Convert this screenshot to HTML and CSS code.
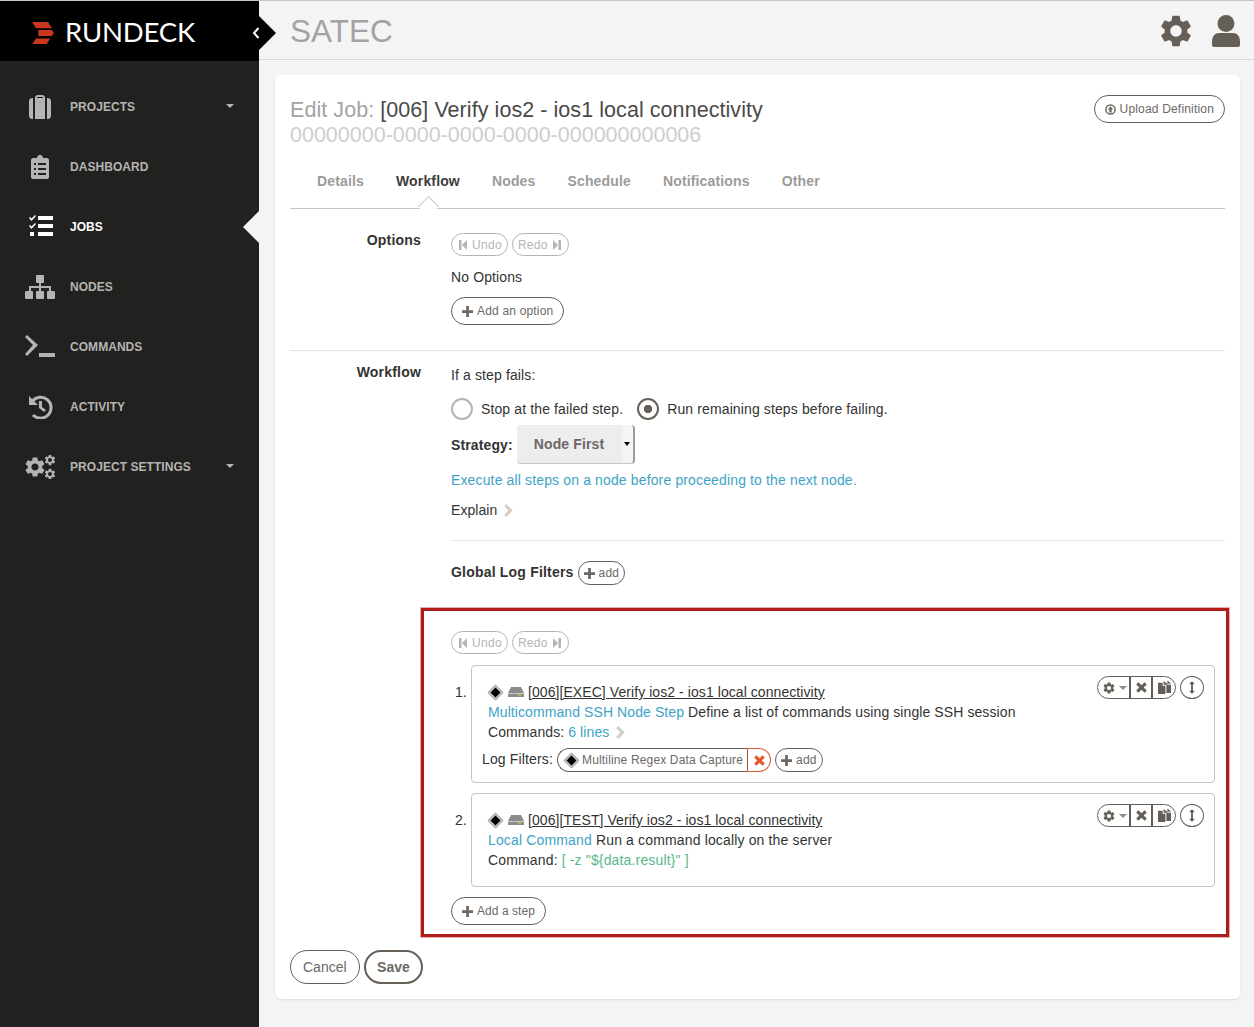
FILE: index.html
```html
<!DOCTYPE html>
<html lang="en">
<head>
    <meta charset="UTF-8">
    <title>Edit Job - Rundeck</title>
    <link rel="stylesheet" href="styles.css">
</head>
<body>
    <svg class="defs" width="0" height="0">
        <symbol id="cog" viewBox="0 0 24 24"><path d="M19.14 12.94c.04-.3.06-.61.06-.94 0-.32-.02-.64-.07-.94l2.03-1.58a.49.49 0 0 0 .12-.61l-1.92-3.32a.488.488 0 0 0-.59-.22l-2.39.96c-.5-.38-1.03-.7-1.62-.94l-.36-2.54a.484.484 0 0 0-.48-.41h-3.84c-.24 0-.43.17-.47.41l-.36 2.54c-.59.24-1.13.57-1.62.94l-2.39-.96c-.22-.08-.47 0-.59.22L2.74 8.87c-.12.21-.08.47.12.61l2.03 1.58c-.05.3-.09.63-.09.94s.02.64.07.94l-2.03 1.58a.49.49 0 0 0-.12.61l1.92 3.32c.12.22.37.29.59.22l2.39-.96c.5.38 1.03.7 1.62.94l.36 2.54c.05.24.24.41.48.41h3.84c.24 0 .44-.17.47-.41l.36-2.54c.59-.24 1.13-.56 1.62-.94l2.39.96c.22.08.47 0 .59-.22l1.92-3.32c.12-.22.07-.47-.12-.61l-2.01-1.58zM12 15.6c-1.98 0-3.6-1.62-3.6-3.6s1.62-3.6 3.6-3.6 3.6 1.62 3.6 3.6-1.62 3.6-3.6 3.6z"/></symbol>
        <symbol id="plus" viewBox="0 0 12 12"><path d="M4.5 0h3v4.5H12v3H7.5V12h-3V7.5H0v-3h4.5z"/></symbol>
        <symbol id="cross" viewBox="0 0 12 12"><path d="M2.6.2 6 3.600 9.400.2l2.400 2.400L8.400 6l3.400 3.400-2.400 2.400L6 8.400l-3.400 3.400-2.400-2.400L3.600 6 .2 2.600z"/></symbol>
        <symbol id="copy" viewBox="0 0 14 14"><path d="M0 2h5v3h3v9H0zM6 0l4 3v1H6zM9 4h5v9H9z"/><path d="M10 0h1l3 3h-4z"/></symbol>
        <symbol id="drive" viewBox="0 0 16 10"><path d="M3 0h10l3 6v4H0V6z"/><path fill="#e8d23c" d="M10 7.5h3v1h-3z"/><path fill="#dcdcdc" d="M0 6h16v.8H0z"/></symbol>
        <symbol id="first" viewBox="0 0 8 10"><path d="M0 0h2.500v10H0zM8 0v10L3 5z"/></symbol>
        <symbol id="last" viewBox="0 0 8 10"><path d="M5.500 0H8v10H5.500zM0 0v10l5-5z"/></symbol>
        <symbol id="chev" viewBox="0 0 9 12"><path d="M2 0l6 6-6 6-2-2 4-4-4-4z"/></symbol>
    </svg>

    <aside class="sidebar">
        <div class="brand">
            <svg class="brand-mark" viewBox="0 0 22 22.500"><path d="M0 0h16l4 6.300H4zM6.300 8h13.500l2.200 3-2.200 3H6.300zM4 16.600h14l-3.300 5.700H0z"/></svg>
            <span class="brand-name">RUNDECK</span>
            <div class="collapse">
                <svg viewBox="0 0 8 12"><path d="M6.500 1 2 6l4.500 5" fill="none" stroke="#fff" stroke-width="2"/></svg>
            </div>
        </div>
        <nav class="nav">
            <a class="nav-item">
                <svg class="nav-icon" viewBox="0 0 30 24"><path d="M7 3h1v21H7c-1 0-3-1-3-3V6c0-2 2-3 3-3zM23 3h-1v21h1c1 0 3-1 3-3V6c0-2-2-3-3-3zM10 3c0-2 1-3 3-3h4c2 0 3 1 3 3v21H10zM12 3h6V2h-6z"/></svg>
                <span>PROJECTS</span><i class="caret"></i>
            </a>
            <a class="nav-item">
                <svg class="nav-icon" viewBox="0 0 30 24"><path fill-rule="evenodd" d="M8 3h4c0-4 6-4 6 0h4c1 0 2 1 2 2v17c0 1-1 2-2 2H8c-1 0-2-1-2-2V5c0-1 1-2 2-2zM9 8v2h2V8zM13 8v2h8V8zM9 13v2h2v-2zM13 13v2h8v-2zM9 18v2h2v-2zM13 18v2h8v-2z"/></svg>
                <span>DASHBOARD</span>
            </a>
            <a class="nav-item active">
                <svg class="nav-icon" viewBox="0 0 30 24"><path d="M4 3l1-1 1.500 1.500L10 0l1 1-4.500 5zM4 11l1-1 1.500 1.500L10 8l1 1-4.500 5zM5 17h4v4H5zM13 1h15v4H13zM13 9h15v4H13zM13 17h15v4H13z"/></svg>
                <span>JOBS</span>
            </a>
            <a class="nav-item">
                <svg class="nav-icon" viewBox="0 0 30 24"><path d="M12 0h6c1 0 1 1 1 1v6c0 1-1 1-1 1h-2v3h10v5h-2v-3h-8v3h-2v-3H6v3H4v-5h10V8h-2c-1 0-1-1-1-1V1s0-1 1-1zM1 16h6c1 0 1 1 1 1v6c0 1-1 1-1 1H1c-1 0-1-1-1-1v-6s0-1 1-1zM12 16h6c1 0 1 1 1 1v6c0 1-1 1-1 1h-6c-1 0-1-1-1-1v-6s0-1 1-1zM23 16h6c1 0 1 1 1 1v6c0 1-1 1-1 1h-6c-1 0-1-1-1-1v-6s0-1 1-1z"/></svg>
                <span>NODES</span>
            </a>
            <a class="nav-item">
                <svg class="nav-icon" viewBox="0 0 30 24"><path d="M2 0l11 10-11 11-2-2 8-9L0 2zM14 18h16v4H14z"/></svg>
                <span>COMMANDS</span>
            </a>
            <a class="nav-item">
                <svg class="nav-icon" viewBox="0 0 30 24"><path fill="none" stroke="currentColor" stroke-width="3" d="M7.500 6A10.500 10.500 0 1 1 8 20"/><path d="M4 1v9h9zM14 6h3v6l4 3-2 2-5-4z"/></svg>
                <span>ACTIVITY</span>
            </a>
            <a class="nav-item">
                <svg class="nav-icon" viewBox="0 0 30 24">
                    <use href="#cog" x="-2" y="0" width="24" height="24"/>
                    <use href="#cog" x="18.500" y="-1.500" width="13" height="13"/>
                    <use href="#cog" x="18.500" y="12.500" width="13" height="13"/>
                </svg>
                <span>PROJECT SETTINGS</span><i class="caret"></i>
            </a>
        </nav>
    </aside>

    <div class="main">
        <header class="topbar">
            <span class="project">SATEC</span>
            <svg class="top-icon" viewBox="0 0 24 24"><use href="#cog"/></svg>
            <svg class="top-user" viewBox="0 0 28 32"><circle cx="14" cy="8.500" r="8.500"/><path d="M0 27c0-6 3-9 7-9h14c4 0 7 3 7 9v3c0 1-1 2-2 2H2c-1 0-2-1-2-2z"/></svg>
        </header>

        <section class="card">
            <div class="title-row">
                <h1 class="title"><span class="title-muted">Edit Job:</span> [006] Verify ios2 - ios1 local connectivity
                    <small class="uuid">00000000-0000-0000-0000-000000000006</small>
                </h1>
                <a class="btn upload">
                    <svg class="ico" viewBox="0 0 12 12"><circle cx="6" cy="6" r="5" fill="none" stroke="currentColor" stroke-width="1.600"/><path d="M6 2.500 9 6H7.300v3.200H4.700V6H3z"/></svg>
                    Upload Definition
                </a>
            </div>

            <ul class="tabs">
                <li>Details</li>
                <li class="current">Workflow</li>
                <li>Nodes</li>
                <li>Schedule</li>
                <li>Notifications</li>
                <li>Other</li>
            </ul>

            <div class="form-row options-row">
                <label class="row-label">Options</label>
                <div>
                    <div class="undo-redo">
                        <a class="btn btn-sm disabled"><svg class="ico-s" viewBox="0 0 8 10"><use href="#first"/></svg> Undo</a>
                        <a class="btn btn-sm disabled">Redo <svg class="ico-s" viewBox="0 0 8 10"><use href="#last"/></svg></a>
                    </div>
                    <p class="no-options">No Options</p>
                    <a class="btn add-option"><svg class="ico" viewBox="0 0 12 12"><use href="#plus"/></svg> Add an option</a>
                </div>
            </div>

            <div class="form-row workflow-row">
                <label class="row-label">Workflow</label>
                <div>
                    <p class="line fails">If a step fails:</p>
                    <div class="radios">
                        <span class="radio"></span><span class="radio-text">Stop at the failed step.</span>
                        <span class="radio checked"></span><span>Run remaining steps before failing.</span>
                    </div>
                    <div class="strategy">
                        <b>Strategy:</b>
                        <div class="select">Node First<i class="select-caret"></i></div>
                    </div>
                    <p class="strategy-desc link">Execute all steps on a node before proceeding to the next node.</p>
                    <p class="explain">Explain <svg class="chev" viewBox="0 0 9 12"><use href="#chev"/></svg></p>
                    <hr class="divider">
                    <div class="global-filters">
                        <b>Global Log Filters</b>
                        <a class="btn btn-sm btn-add"><svg class="ico" viewBox="0 0 12 12"><use href="#plus"/></svg> add</a>
                    </div>
                </div>
            </div>

            <div class="steps-box">
                <div class="undo-redo">
                    <a class="btn btn-sm disabled"><svg class="ico-s" viewBox="0 0 8 10"><use href="#first"/></svg> Undo</a>
                    <a class="btn btn-sm disabled">Redo <svg class="ico-s" viewBox="0 0 8 10"><use href="#last"/></svg></a>
                </div>

                <div class="step step-one">
                    <span class="step-num">1.</span>
                    <div class="step-panel">
                        <div class="step-tools">
                            <div class="tool-group">
                                <a class="tool tool-cog"><svg viewBox="0 0 24 24"><use href="#cog"/></svg><i class="tool-caret"></i></a>
                                <a class="tool tool-x"><svg viewBox="0 0 12 12"><use href="#cross"/></svg></a>
                                <a class="tool tool-copy"><svg viewBox="0 0 14 14"><use href="#copy"/></svg></a>
                            </div>
                            <a class="tool-round"><svg viewBox="0 0 8 14"><path d="M4 0l3 3.500H5v7h2L4 14l-3-3.500h2v-7H1z"/></svg></a>
                        </div>
                        <p class="step-title"><i class="diamond"></i><svg class="drive" viewBox="0 0 16 10"><use href="#drive"/></svg><u>[006][EXEC] Verify ios2 - ios1 local connectivity</u></p>
                        <p class="line"><span class="link">Multicommand SSH Node Step</span> Define a list of commands using single SSH session</p>
                        <p class="line">Commands: <span class="link">6 lines</span> <svg class="chev" viewBox="0 0 9 12"><use href="#chev"/></svg></p>
                        <div class="log-filters">
                            <span class="log-label">Log Filters:</span>
                            <a class="filter-pill"><i class="diamond"></i>Multiline Regex Data Capture</a><a class="filter-remove"><svg viewBox="0 0 12 12"><use href="#cross"/></svg></a>
                            <a class="btn btn-sm btn-add"><svg class="ico" viewBox="0 0 12 12"><use href="#plus"/></svg> add</a>
                        </div>
                    </div>
                </div>

                <div class="step step-two">
                    <span class="step-num">2.</span>
                    <div class="step-panel">
                        <div class="step-tools">
                            <div class="tool-group">
                                <a class="tool tool-cog"><svg viewBox="0 0 24 24"><use href="#cog"/></svg><i class="tool-caret"></i></a>
                                <a class="tool tool-x"><svg viewBox="0 0 12 12"><use href="#cross"/></svg></a>
                                <a class="tool tool-copy"><svg viewBox="0 0 14 14"><use href="#copy"/></svg></a>
                            </div>
                            <a class="tool-round"><svg viewBox="0 0 8 14"><path d="M4 0l3 3.500H5v7h2L4 14l-3-3.500h2v-7H1z"/></svg></a>
                        </div>
                        <p class="step-title"><i class="diamond"></i><svg class="drive" viewBox="0 0 16 10"><use href="#drive"/></svg><u>[006][TEST] Verify ios2 - ios1 local connectivity</u></p>
                        <p class="line"><span class="link">Local Command</span> Run a command locally on the server</p>
                        <p class="line">Command: <span class="code">[ -z "${data.result}" ]</span></p>
                    </div>
                </div>

                <a class="btn add-step"><svg class="ico" viewBox="0 0 12 12"><use href="#plus"/></svg> Add a step</a>
            </div>

            <div class="actions">
                <a class="btn btn-lg">Cancel</a>
                <a class="btn btn-lg btn-save">Save</a>
            </div>
        </section>
    </div>
</body>
</html>
```

FILE: styles.css
```css
* {
    box-sizing: border-box;
}
body {
    margin: 0;
    height: 1027px;
    overflow: hidden;
    display: flex;
    font-family: 'Liberation Sans', Arial, sans-serif;
    font-size: 14px;
    line-height: 20px;
    letter-spacing: 0.12px;
    color: #333332;
    background: #f4f4f4;
    border-top: 1px solid #c8c6c3;
}
p {
    margin: 0;
}
.defs {
    position: absolute;
}

/* sidebar */
.sidebar {
    width: 259px;
    flex: none;
    background: #212120;
    color: #b5b4b2;
}
.brand {
    position: relative;
    height: 60px;
    background: #000;
    display: flex;
    align-items: center;
    padding: 2px 0 0 32px;
}
.brand-mark {
    width: 22px;
    height: 22.500px;
    margin-top: 2px;
    fill: #c8371f;
}
.brand-name {
    margin-left: 11px;
    font-family: Lato, sans-serif;
    font-size: 27.500px;
    color: #fff;
    letter-spacing: -0.200px;
}
.collapse {
    position: absolute;
    left: 242px;
    top: 15px;
    width: 34px;
    height: 34px;
    background: #000;
    clip-path: polygon(50% 0, 100% 50%, 50% 100%, 0 50%);
}
.collapse svg {
    position: absolute;
    left: 10px;
    top: 11px;
    width: 8px;
    height: 12px;
}
.nav {
    padding-top: 16px;
}
.nav-item {
    position: relative;
    height: 60px;
    display: flex;
    align-items: center;
    padding: 0 25px;
    font-size: 12px;
    font-weight: bold;
    letter-spacing: 0.05px;
}
.nav-icon {
    width: 30px;
    height: 24px;
    margin-right: 15px;
    fill: currentColor;
}
.nav-item.active {
    color: #fff;
}
.nav-item.active::after {
    content: "";
    position: absolute;
    right: 0;
    top: 14px;
    border: 16px solid transparent;
    border-left: 0;
    border-right-color: #f4f4f4;
}
.caret {
    position: absolute;
    left: 226px;
    top: 27px;
    border: 4px solid transparent;
    border-top-color: #b5b4b2;
    border-bottom: 0;
}

/* top bar */
.main {
    flex: 1;
    min-width: 0;
}
.topbar {
    height: 59px;
    display: flex;
    align-items: center;
    padding: 1px 14px 0 31px;
    border-bottom: 1px solid #d8d7d5;
}
.project {
    flex: 1;
    font-size: 31.500px;
    color: #a3a3a3;
    letter-spacing: 0;
}
.top-icon {
    width: 38px;
    height: 38px;
    fill: #665f58;
    margin-right: 17px;
}
.top-user {
    width: 28px;
    height: 32px;
    fill: #665f58;
}

/* card */
.card {
    margin: 15px 14px 0 16px;
    height: 924px;
    padding: 23px 15px 0;
    background: #fff;
    border-radius: 6px;
    box-shadow: 0 1px 2px rgba(0, 0, 0, 0.1);
}
.title-row {
    display: flex;
    justify-content: space-between;
    align-items: flex-start;
}
.title {
    margin: 0;
    height: 48px;
    font-size: 21.500px;
    font-weight: normal;
    line-height: 24px;
    letter-spacing: 0.06px;
    color: #4a4a48;
}
.title-muted {
    color: #a3a3a3;
}
.uuid {
    display: block;
    margin-top: 1px;
    font-size: 21.500px;
    letter-spacing: 0;
    color: #cfcecb;
}
.btn {
    display: inline-flex;
    align-items: center;
    height: 28px;
    padding: 0 10px;
    border: 1px solid #665f58;
    border-radius: 16px;
    font-size: 12px;
    letter-spacing: 0.18px;
    color: #6d6863;
    background: #fff;
    white-space: nowrap;
}
.btn-sm {
    height: 24px;
    padding: 0 5px;
}
.btn-lg {
    height: 34px;
    padding: 0 12px;
    font-size: 14px;
    letter-spacing: 0;
    border-radius: 17px;
}
.btn-save {
    padding: 0 11.500px;
    font-weight: bold;
    border-width: 2px;
}
.upload {
    margin-top: -3px;
}
.ico {
    width: 11px;
    height: 11px;
    fill: currentColor;
    margin-right: 4px;
}
.ico-s {
    width: 8px;
    height: 10px;
    fill: currentColor;
    margin: 0 2px;
}
.disabled {
    border-color: #b5b4b2;
    color: #b5b4b2;
    letter-spacing: 0.3px;
}
.undo-redo {
    display: flex;
    gap: 4px;
}
.undo-redo .btn {
    height: 23px;
    gap: 3px;
}

/* tabs */
.tabs {
    display: flex;
    list-style: none;
    margin: 12px 0 0;
    padding: 0 0 0 11px;
    height: 51px;
    border-bottom: 1px solid #c8c6c3;
    font-weight: bold;
    letter-spacing: 0.15px;
    color: #9c9b98;
}
.tabs li {
    position: relative;
    padding: 13px 16px 0;
}
.tabs .current {
    color: #3d3d3b;
}
.tabs .current::after {
    content: "";
    position: absolute;
    left: 50%;
    bottom: -6px;
    width: 14px;
    height: 14px;
    margin-left: -7px;
    background: #fff;
    border: 1px solid #c8c6c3;
    border-width: 1px 0 0 1px;
    transform: rotate(45deg);
}

/* form rows */
.form-row {
    display: grid;
    grid-template-columns: 131px 1fr;
    column-gap: 30px;
}
.row-label {
    text-align: right;
    font-weight: bold;
    letter-spacing: 0.2px;
}
.options-row {
    padding: 24px 0 25px;
    border-bottom: 1px solid #e4e3e1;
    height: 142px;
}
.options-row .row-label {
    margin-top: -3px;
}
.no-options {
    margin: 11px 0 10px;
}
.workflow-row {
    padding-top: 12px;
}
.workflow-row .row-label {
    margin-top: -1px;
}
.line {
    height: 20px;
}
.fails {
    margin-top: 2px;
}
.radios {
    display: flex;
    align-items: center;
    margin-top: 12px;
    height: 24px;
}
.radio {
    width: 22px;
    height: 22px;
    margin-right: 8px;
    border: 2px solid #b5b4b2;
    border-radius: 50%;
}
.radio-text {
    margin-right: 14px;
}
.radio.checked {
    border-color: #665f58;
    background: radial-gradient(circle, #665f58 4px, #fff 4.500px);
}
.strategy {
    display: flex;
    align-items: center;
    margin-top: 4px;
    gap: 4px;
}
.select {
    position: relative;
    width: 118px;
    height: 39px;
    padding: 0 17px;
    display: flex;
    align-items: center;
    font-weight: bold;
    color: #6d6863;
    background: linear-gradient(to right, #edecef 105px, #f5f5f5 105px);
    border-radius: 4px;
    border-right: 2px solid #9c9b98;
    border-bottom: 1px solid #c8c6c3;
}
.select-caret {
    position: absolute;
    right: 3px;
    top: 17px;
    border: 3px solid transparent;
    border-top: 4px solid #000;
    border-bottom: 0;
}
.strategy-desc {
    margin-top: 6px;
    letter-spacing: 0.14px;
}
.link {
    color: #3ea3c6;
}
.code {
    color: #57b98c;
}
.explain {
    margin-top: 10px;
    letter-spacing: 0.05px;
}
.chev {
    width: 10px;
    height: 13px;
    fill: #d0cfcc;
    margin-left: 3px;
    vertical-align: -2px;
}
.divider {
    border: 0;
    border-top: 1px solid #e4e3e1;
    margin: 20px 0 0;
}
.global-filters {
    display: flex;
    align-items: center;
    gap: 4px;
    height: 24px;
    margin-top: 19px;
    letter-spacing: 0.2px;
}
.global-filters .btn-add {
    margin-top: 2px;
}

/* steps */
.steps-box {
    height: 329px;
    margin: 24px -4px 0 131px;
    padding: 20px 0 0 27px;
    border: 3px solid #b01b1b;
    box-shadow: 0 0 0 1px rgba(176, 27, 27, 0.35);
}
.step {
    display: flex;
    margin-top: 10px;
    padding-right: 11px;
    letter-spacing: 0.07px;
}
.step-one {
    margin-top: 11px;
}
.step-one .line {
    letter-spacing: 0.09px;
}
.step-two .line {
    letter-spacing: 0.15px;
}
.step-num {
    width: 20px;
    padding: 17px 0 0 4px;
}
.step-panel {
    position: relative;
    flex: 1;
    padding: 16px 16px 0;
    border: 1px solid #c8c6c3;
    border-radius: 4px;
}
.step-one .step-panel {
    height: 118px;
}
.step-two .step-panel {
    height: 94px;
}
.step-title {
    height: 20px;
    display: flex;
    align-items: center;
}
.diamond {
    display: inline-block;
    flex: none;
    width: 11px;
    height: 11px;
    margin: 0 7px 0 2px;
    background: #000;
    border: 2px solid #bdbdbb;
    transform: rotate(45deg);
}
.drive {
    width: 16px;
    height: 10px;
    fill: #8c8b88;
    margin-right: 4px;
}
.step-tools {
    position: absolute;
    top: 10px;
    right: 10px;
    display: flex;
    gap: 4px;
}
.tool-group {
    display: flex;
    height: 23px;
    border: 1px solid #665f58;
    border-radius: 12px;
    overflow: hidden;
}
.tool {
    display: flex;
    align-items: center;
    justify-content: center;
    fill: #665f58;
    border-right: 2px solid #665f58;
}
.tool-cog {
    width: 33px;
    padding-left: 2px;
}
.tool-cog svg {
    width: 14px;
    height: 14px;
}
.tool-caret {
    margin-left: 3px;
    border: 4px solid transparent;
    border-top-color: #8c8b88;
    border-bottom: 0;
}
.tool-x {
    width: 22px;
}
.tool-x svg {
    width: 11px;
    height: 11px;
}
.tool-copy {
    width: 22px;
    border-right: 0;
}
.tool-copy svg {
    width: 13px;
    height: 13px;
}
.tool-round {
    width: 24px;
    height: 23px;
    display: flex;
    align-items: center;
    justify-content: center;
    fill: #665f58;
    border: 1px solid #665f58;
    border-radius: 50%;
}
.tool-round svg {
    width: 8px;
    height: 13px;
}
.log-filters {
    display: flex;
    align-items: center;
    margin: 6px 0 0 -6px;
    letter-spacing: 0.15px;
}
.log-label {
    margin: -2px 4px 0 0;
}
.filter-pill {
    display: flex;
    align-items: center;
    width: 190px;
    height: 24px;
    padding-left: 6px;
    border: 1px solid #665f58;
    border-right-width: 0;
    border-radius: 12px 0 0 12px;
    font-size: 12px;
    color: #6d6863;
    white-space: nowrap;
}
.filter-pill .diamond {
    margin: 0 5px 0 2px;
}
.filter-remove {
    display: flex;
    align-items: center;
    justify-content: center;
    width: 24px;
    height: 24px;
    border: 1px solid #e5562a;
    border-left-color: #a0522d;
    border-radius: 0 12px 12px 0;
    fill: #e5562a;
    margin-right: 4px;
}
.filter-remove svg {
    width: 11px;
    height: 11px;
}
.add-step {
    margin-top: 10px;
    letter-spacing: 0.05px;
}
.actions {
    display: flex;
    gap: 4px;
    margin-top: 13px;
}
```
